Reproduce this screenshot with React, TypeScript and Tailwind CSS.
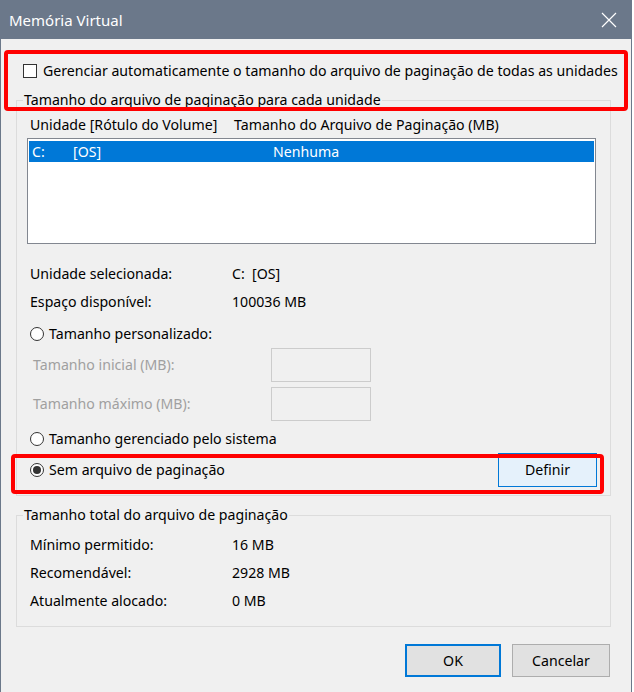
import React from "react";

const font = { fontFamily: '"Noto Sans", "Open Sans", sans-serif' };

function Radio({ checked }: { checked?: boolean }) {
  return (
    <span className="w-[14px] h-[14px] rounded-full border border-[#333333] bg-white flex items-center justify-center shrink-0">
      {checked && <span className="w-[8px] h-[8px] rounded-full bg-[#333333]" />}
    </span>
  );
}

export default function App() {
  return (
    <div className="w-[634px] h-[692px] bg-white relative overflow-hidden text-[14.15px] text-black" style={font}>
      <div className="w-[632px] h-[692px] border-x border-[#6b788a] bg-[#f0f0f0] flex flex-col">
        {/* title bar */}
        <div className="h-[39px] bg-[#6b788a] flex items-center justify-between pl-[8px] pr-[14px] shrink-0">
          <span className="text-white text-[15px] leading-[20px]">Memória Virtual</span>
          <svg width="16" height="16" viewBox="0 0 16 16">
            <path d="M1 1 L15 15 M15 1 L1 15" stroke="white" strokeWidth="1.2" />
          </svg>
        </div>

        {/* checkbox row */}
        <div className="mt-[22px] ml-[22px] h-[20px] flex items-center">
          <span className="w-[14px] h-[14px] border border-[#333333] bg-white shrink-0" />
          <span className="ml-[6px] leading-[20px] whitespace-nowrap">
            Gerenciar automaticamente o tamanho do arquivo de paginação de todas as unidades
          </span>
        </div>

        {/* group 1 */}
        <fieldset className="mt-[9px] ml-[15px] w-[595px] border border-[#dcdcdc] pb-[8px]">
          <legend className="ml-[6px] px-[1px] leading-[20px]">Tamanho do arquivo de paginação para cada unidade</legend>
          <div className="mt-[5px] pl-[13px] h-[20px] flex leading-[20px]">
            <span className="w-[204px]">Unidade [Rótulo do Volume]</span>
            <span>Tamanho do Arquivo de Paginação (MB)</span>
          </div>
          <div className="mt-[3px] ml-[10px] w-[569px] h-[106px] border border-[#828790] bg-white px-[1px] pt-[2px]">
            <div className="h-[21px] bg-[#0078d7] text-white flex items-center leading-[20px]">
              <span className="pl-[3px] w-[44px]">C:</span>
              <span className="w-[200px]">[OS]</span>
              <span>Nenhuma</span>
            </div>
          </div>

          <div className="mt-[20px] pl-[13px] h-[20px] flex leading-[20px]">
            <span className="w-[202px]">Unidade selecionada:</span>
            <span>C:&nbsp; [OS]</span>
          </div>
          <div className="mt-[8px] pl-[13px] h-[20px] flex leading-[20px]">
            <span className="w-[202px]">Espaço disponível:</span>
            <span>100036 MB</span>
          </div>

          <div className="mt-[12px] pl-[13px] h-[20px] flex items-center leading-[20px]">
            <Radio />
            <span className="ml-[5px]">Tamanho personalizado:</span>
          </div>

          <div className="mt-[4px] pl-[13px] h-[34px] flex items-center">
            <span className="w-[241px] pl-[3px] text-[#a0a0a0] leading-[20px]">Tamanho inicial (MB):</span>
            <span className="w-[100px] h-[34px] border border-[#cccccc] bg-[#f0f0f0]" />
          </div>
          <div className="mt-[5px] pl-[13px] h-[34px] flex items-center">
            <span className="w-[241px] pl-[3px] text-[#a0a0a0] leading-[20px]">Tamanho máximo (MB):</span>
            <span className="w-[100px] h-[34px] border border-[#cccccc] bg-[#f0f0f0]" />
          </div>

          <div className="mt-[8px] pl-[13px] h-[20px] flex items-center leading-[20px]">
            <Radio />
            <span className="ml-[5px]">Tamanho gerenciado pelo sistema</span>
          </div>

          <div className="mt-[4px] pl-[13px] pr-[13px] h-[34px] flex items-center leading-[20px]">
            <Radio checked />
            <span className="ml-[5px]">Sem arquivo de paginação</span>
            <button className="ml-auto w-[99px] h-[34px] border border-[#0078d7] bg-[#e5f1fb] leading-[20px]">Definir</button>
          </div>
        </fieldset>

        {/* group 2 */}
        <fieldset className="mt-[9px] ml-[15px] w-[595px] border border-[#dcdcdc] pb-[15px]">
          <legend className="ml-[6px] px-[1px] leading-[20px]">Tamanho total do arquivo de paginação</legend>
          <div className="mt-[10px] pl-[13px] h-[20px] flex leading-[20px]">
            <span className="w-[202px]">Mínimo permitido:</span>
            <span>16 MB</span>
          </div>
          <div className="mt-[8px] pl-[13px] h-[20px] flex leading-[20px]">
            <span className="w-[202px]">Recomendável:</span>
            <span>2928 MB</span>
          </div>
          <div className="mt-[8px] pl-[13px] h-[20px] flex leading-[20px]">
            <span className="w-[202px]">Atualmente alocado:</span>
            <span>0 MB</span>
          </div>
        </fieldset>

        {/* buttons */}
        <div className="mt-[17px] flex justify-end gap-[11px] pr-[21px]">
          <button className="w-[96px] h-[33px] border-2 border-[#0078d7] bg-[#e1e1e1] leading-[20px]">OK</button>
          <button className="w-[98px] h-[33px] border border-[#adadad] bg-[#e1e1e1] leading-[20px]">Cancelar</button>
        </div>
      </div>

      {/* red annotation boxes */}
      <div className="absolute left-[4px] top-[50px] w-[624px] h-[61px] border-[4px] border-[#ff0000] rounded-[4px] pointer-events-none" />
      <div className="absolute left-[11px] top-[454px] w-[593px] h-[40px] border-[4px] border-[#ff0000] rounded-[4px] pointer-events-none" />
    </div>
  );
}
